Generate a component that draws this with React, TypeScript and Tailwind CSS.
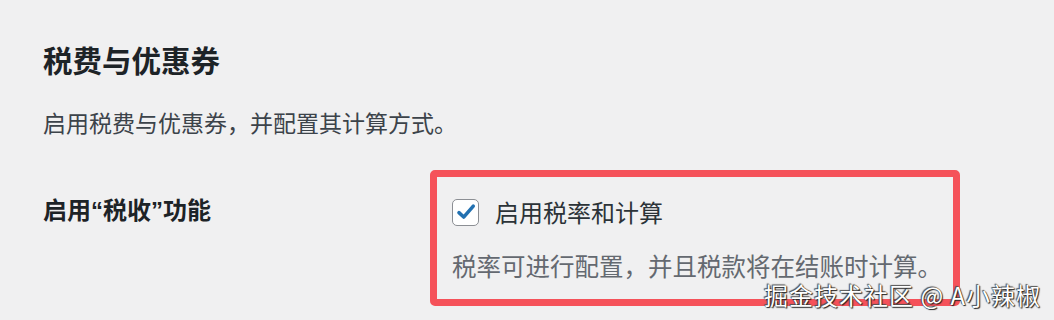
import React from 'react'

const font = { fontFamily: '"Noto Sans CJK SC", "Noto Sans", sans-serif' }
const latinFirst = { fontFamily: '"Liberation Sans", "Noto Sans CJK SC", sans-serif' }

function CheckBox() {
  return (
    <span className="flex h-[27px] w-[27px] shrink-0 items-center justify-center rounded-[5px] border-[1.5px] border-[#8c8f94] bg-white">
      <svg viewBox="0 0 20 20" className="h-[22px] w-[22px]">
        <path d="M3.6 10.6 L7.9 14.6 L16.6 4.6" fill="none" stroke="#2271b1" strokeWidth="3.2" strokeLinecap="round" strokeLinejoin="round" />
      </svg>
    </span>
  )
}

export default function App() {
  return (
    <div className="relative h-[320px] w-full overflow-hidden bg-[#f0f0f1] px-[43px] pt-[41px]" style={font}>
      <h2 className="text-[29.5px] leading-[36px] font-bold text-[#1d2327]">税费与优惠券</h2>
      <p className="mt-[29px] text-[23px] leading-[32px] text-[#3c434a]">启用税费与优惠券，并配置其计算方式。</p>

      <div className="mt-[32px] flex">
        <div className="w-[387px] shrink-0 pt-[25px] text-[24px] leading-[32px] font-bold text-[#1d2327]" style={latinFirst}>
          启用“税收”功能
        </div>
        <div className="w-[530px] rounded-[5px] border-[7px] border-[#f5525a] pl-[15px] pt-[19px] pb-[17px]">
          <label className="flex h-[32px] items-center gap-[16px]">
            <CheckBox />
            <span className="text-[24px] leading-[32px] text-[#2c3338]">启用税率和计算</span>
          </label>
          <p className="mt-[22px] text-[24.5px] leading-[32px] text-[#646970]">税率可进行配置，并且税款将在结账时计算。</p>
        </div>
      </div>

      <div className="absolute left-[764px] top-[279px] text-[24px] leading-[32px] tracking-[1px] text-white [text-shadow:0_0_1px_#222,1px_1px_1px_#222,-1px_-1px_1px_#555]">
        掘金技术社区 @ A小辣椒
      </div>
    </div>
  )
}
